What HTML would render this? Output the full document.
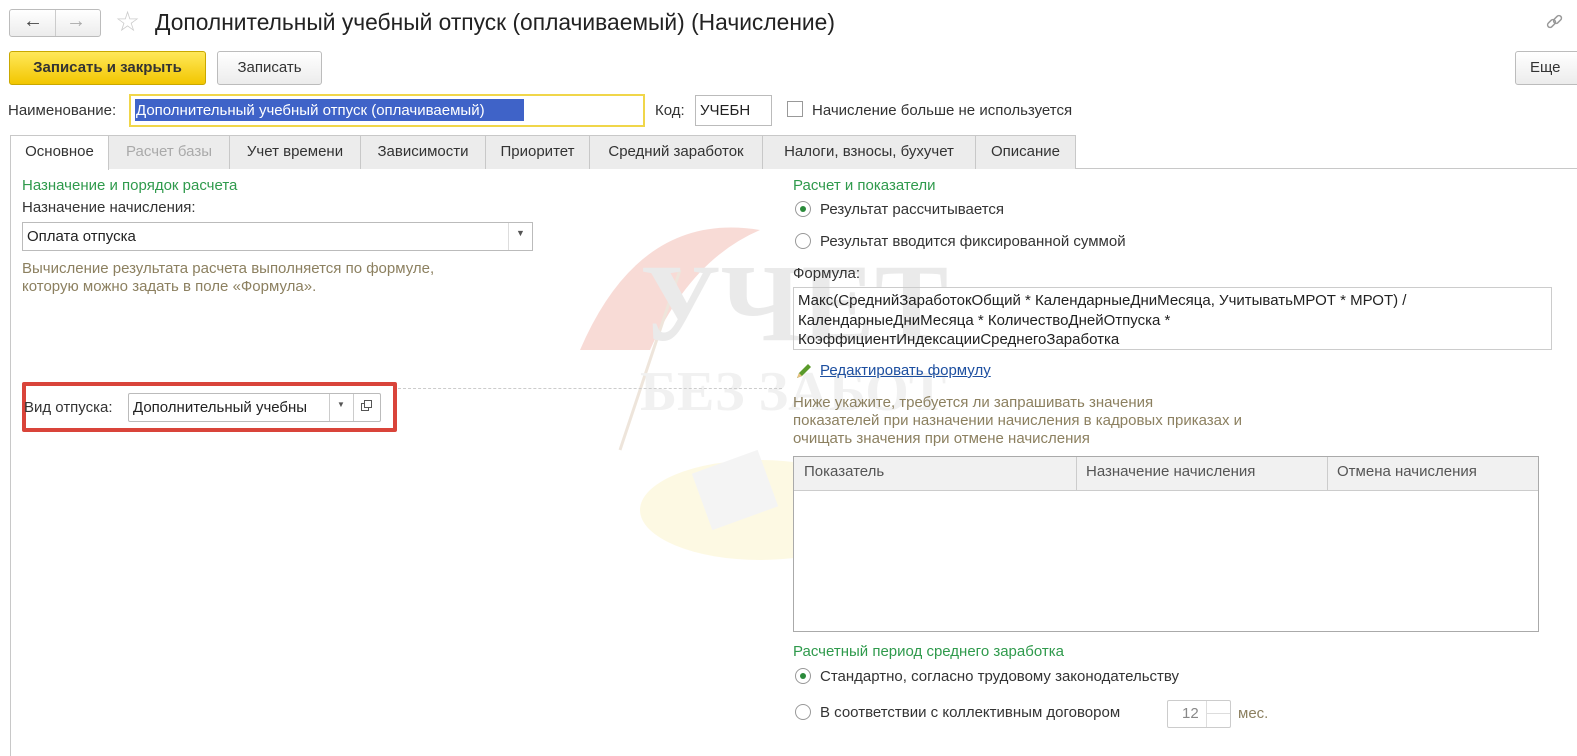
<!DOCTYPE html>
<html><head><meta charset="utf-8"><style>
body{margin:0;width:1577px;height:756px;background:#fff;font-family:"Liberation Sans",Arial,sans-serif;font-size:15px;color:#333;position:relative;overflow:hidden}
.a{position:absolute;white-space:nowrap}
.btn{position:absolute;border:1px solid #bcbcbc;border-radius:3px;background:linear-gradient(#fff,#ececec);box-sizing:border-box;text-align:center}
.g{color:#2f9a4c}
.n{color:#8c8060}
.tab{position:absolute;top:135px;height:34px;box-sizing:border-box;border:1px solid #c8c8c8;border-bottom:none;background:#ececec;line-height:32px;text-align:center;color:#333}
.rad{position:absolute;width:16px;height:16px;border:1px solid #999;border-radius:50%;box-sizing:border-box;background:#fff}
.rad.on::after{content:"";position:absolute;left:4px;top:4px;width:6px;height:6px;border-radius:50%;background:#2a8a3a}
</style></head><body>
<!-- watermark -->
<svg class="a" style="left:560px;top:190px;opacity:.2" width="420" height="400">
<path d="M20 160 Q80 20 200 40 Q130 70 90 160Z" fill="#e0503a"/>
<path d="M120 80 L60 260" stroke="#b08050" stroke-width="3"/>
<text x="80" y="150" font-family="Liberation Serif" font-size="110" font-weight="bold" fill="#999">УЧЕТ</text>
<text x="80" y="220" font-family="Liberation Serif" font-size="56" font-weight="bold" fill="#bbb">БЕЗ ЗАБОТ</text>
<ellipse cx="200" cy="320" rx="120" ry="50" fill="#f7e27a"/>
<rect x="140" y="270" width="70" height="60" fill="#ccc" transform="rotate(-20 175 300)"/>
</svg>

<div class="btn" style="left:9px;top:9px;width:92px;height:28px"></div>
<div class="a" style="left:55px;top:10px;width:1px;height:26px;background:#ccc"></div>
<div class="a" style="left:23px;top:10px;font-size:20px;color:#444">&#8592;</div>
<div class="a" style="left:66px;top:10px;font-size:20px;color:#aaa">&#8594;</div>
<div class="a" style="left:115px;top:5px;font-size:28px;color:#ccc">&#9734;</div>
<div class="a" style="left:155px;top:9px;font-size:22.8px;color:#222">Дополнительный учебный отпуск (оплачиваемый) (Начисление)</div>
<svg class="a" style="left:1545px;top:13px" width="20" height="20"><g fill="none" stroke="#999" stroke-width="1.5"><rect x="2" y="8" width="9" height="5" rx="2.5" transform="rotate(-45 6.5 10.5)"/><rect x="8" y="4" width="9" height="5" rx="2.5" transform="rotate(-45 12.5 6.5)"/></g></svg>

<div class="btn" style="left:9px;top:51px;width:197px;height:34px;background:linear-gradient(#ffe85a,#f2c600);border-color:#c9a800;font-weight:bold;line-height:32px;color:#333">Записать и закрыть</div>
<div class="btn" style="left:217px;top:51px;width:105px;height:34px;line-height:32px">Записать</div>
<div class="btn" style="left:1515px;top:51px;width:70px;height:34px;line-height:32px;text-align:left;padding-left:14px">Еще</div>

<div class="a" style="left:8px;top:102px">Наименование:</div>
<div class="a" style="left:129px;top:94px;width:516px;height:33px;border:2px solid #f0d64a;box-sizing:border-box"></div>
<div class="a" style="left:135px;top:99px;width:389px;height:22px;background:#3f63c8"></div>
<div class="a" style="left:136px;top:102px;color:#fff">Дополнительный учебный отпуск (оплачиваемый)</div>
<div class="a" style="left:655px;top:102px">Код:</div>
<div class="a" style="left:695px;top:95px;width:77px;height:31px;border:1px solid #bbb;box-sizing:border-box;padding:6px 4px;color:#222">УЧЕБН</div>
<div class="a" style="left:787px;top:101px;width:16px;height:16px;border:1px solid #999;box-sizing:border-box"></div>
<div class="a" style="left:812px;top:102px">Начисление больше не используется</div>

<div class="a" style="left:108px;top:168px;width:1469px;height:1px;background:#c8c8c8"></div>
<div class="a" style="left:10px;top:168px;width:1px;height:588px;background:#c8c8c8"></div>
<div class="tab" style="left:10px;width:99px;background:#fff;height:35px">Основное</div>
<div class="tab" style="left:108px;width:122px;color:#aaa">Расчет базы</div>
<div class="tab" style="left:229px;width:132px">Учет времени</div>
<div class="tab" style="left:360px;width:126px">Зависимости</div>
<div class="tab" style="left:485px;width:105px">Приоритет</div>
<div class="tab" style="left:589px;width:174px">Средний заработок</div>
<div class="tab" style="left:762px;width:214px">Налоги, взносы, бухучет</div>
<div class="tab" style="left:975px;width:101px">Описание</div>

<div class="a g" style="left:22px;top:177px">Назначение и порядок расчета</div>
<div class="a" style="left:22px;top:199px">Назначение начисления:</div>
<div class="a" style="left:22px;top:222px;width:511px;height:29px;border:1px solid #bbb;box-sizing:border-box;padding:5px 4px;color:#222">Оплата отпуска</div>
<div class="a" style="left:508px;top:223px;width:1px;height:27px;background:#ddd"></div>
<div class="a" style="left:516px;top:228px;font-size:9px;color:#555">&#9660;</div>
<div class="a n" style="left:22px;top:260px">Вычисление результата расчета выполняется по формуле,</div>
<div class="a n" style="left:22px;top:278px">которую можно задать в поле «Формула».</div>
<div class="a" style="left:22px;top:388px;width:760px;border-top:1px dashed #ccc"></div>
<div class="a" style="left:22px;top:382px;width:375px;height:50px;border:4px solid #d9443a;border-radius:2px;box-sizing:border-box;background:#fff"></div>
<div class="a" style="left:24px;top:399px">Вид отпуска:</div>
<div class="a" style="left:128px;top:393px;width:253px;height:29px;border:1px solid #bbb;border-radius:2px;box-sizing:border-box;padding:5px 4px;color:#222">Дополнительный учебны</div>
<div class="a" style="left:329px;top:394px;width:1px;height:27px;background:#ccc"></div>
<div class="a" style="left:353px;top:394px;width:1px;height:27px;background:#ccc"></div>
<div class="a" style="left:337px;top:400px;font-size:8px;color:#555">&#9660;</div>
<svg class="a" style="left:360px;top:399px" width="14" height="14"><g fill="none" stroke="#555"><rect x="1.5" y="4.5" width="7" height="7"/><rect x="4.5" y="1.5" width="7" height="7" fill="#fff"/></g></svg>

<div class="a g" style="left:793px;top:177px">Расчет и показатели</div>
<div class="rad on" style="left:795px;top:201px"></div>
<div class="a" style="left:820px;top:201px">Результат рассчитывается</div>
<div class="rad" style="left:795px;top:233px"></div>
<div class="a" style="left:820px;top:233px">Результат вводится фиксированной суммой</div>
<div class="a" style="left:793px;top:265px">Формула:</div>
<div class="a" style="left:793px;top:287px;width:759px;height:63px;border:1px solid #ccc;box-sizing:border-box;padding:3px 4px;line-height:19.5px;color:#222;white-space:normal">Макс(СреднийЗаработокОбщий * КалендарныеДниМесяца, УчитыватьМРОТ * МРОТ) /<br>КалендарныеДниМесяца * КоличествоДнейОтпуска *<br>КоэффициентИндексацииСреднегоЗаработка</div>
<svg class="a" style="left:795px;top:362px" width="18" height="18"><path d="M2 16 L4 11 L13 2 L16 5 L7 14 Z" fill="#5a9a2a"/><path d="M2 16 L4 11 L7 14Z" fill="#e8c080"/></svg>
<div class="a" style="left:820px;top:362px;color:#1d4fa0;text-decoration:underline">Редактировать формулу</div>
<div class="a n" style="left:793px;top:394px">Ниже укажите, требуется ли запрашивать значения</div>
<div class="a n" style="left:793px;top:412px">показателей при назначении начисления в кадровых приказах и</div>
<div class="a n" style="left:793px;top:430px">очищать значения при отмене начисления</div>
<div class="a" style="left:793px;top:456px;width:746px;height:176px;border:1px solid #aaa;box-sizing:border-box;background:#fff"></div>
<div class="a" style="left:794px;top:457px;width:744px;height:33px;background:#f1f1f1;border-bottom:1px solid #ccc"></div>
<div class="a" style="left:1076px;top:457px;width:1px;height:33px;background:#ccc"></div>
<div class="a" style="left:1327px;top:457px;width:1px;height:33px;background:#ccc"></div>
<div class="a" style="left:804px;top:463px;color:#555">Показатель</div>
<div class="a" style="left:1086px;top:463px;color:#555">Назначение начисления</div>
<div class="a" style="left:1337px;top:463px;color:#555">Отмена начисления</div>

<div class="a g" style="left:793px;top:643px">Расчетный период среднего заработка</div>
<div class="rad on" style="left:795px;top:668px"></div>
<div class="a" style="left:820px;top:668px">Стандартно, согласно трудовому законодательству</div>
<div class="rad" style="left:795px;top:704px"></div>
<div class="a" style="left:820px;top:704px">В соответствии с коллективным договором</div>
<div class="a" style="left:1167px;top:700px;width:64px;height:28px;border:1px solid #ccc;border-radius:2px;box-sizing:border-box"></div>
<div class="a" style="left:1182px;top:705px;color:#888">12</div>
<div class="a" style="left:1206px;top:701px;width:1px;height:26px;background:#ddd"></div>
<div class="a" style="left:1207px;top:713px;width:23px;height:1px;background:#ddd"></div>
<div class="a n" style="left:1238px;top:705px">мес.</div>
</body></html>
